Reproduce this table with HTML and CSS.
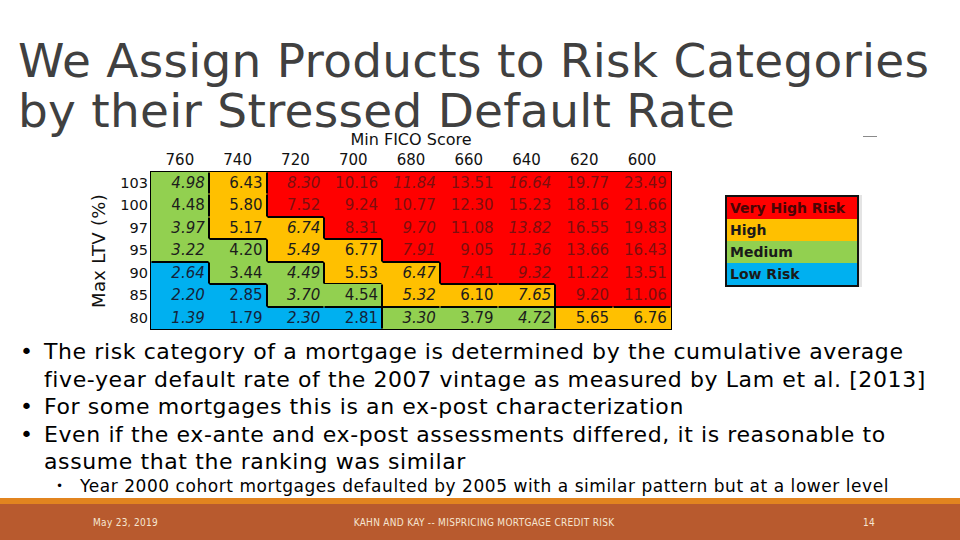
FILE: index.html
```html
<!DOCTYPE html>
<html lang="en">
<head>
<meta charset="utf-8">
<title>We Assign Products to Risk Categories</title>
<link rel="stylesheet" href="styles.css">
</head>
<body>
<div class="slide">
  <h1 class="title"><span class="t1">We Assign Products to Risk Categories</span><span class="t2">by their Stressed Default Rate</span></h1>
  <span class="stray"></span>

  <div class="figure">
    <div class="chart">
      <div class="fico-title">Min FICO Score</div>
      <div class="col-heads">
        <span>760</span><span>740</span><span>720</span><span>700</span><span>680</span><span>660</span><span>640</span><span>620</span><span>600</span>
      </div>
      <div class="ylabel">Max LTV (%)</div>
      <div class="row-heads">
        <span>103</span><span>100</span><span>97</span><span>95</span><span>90</span><span>85</span><span>80</span>
      </div>
      <div class="cells">
        <!-- 103 -->
        <span class="cell cg it e-r">4.98</span>
        <span class="cell co e-l e-r">6.43</span>
        <span class="cell cr it e-l">8.30</span>
        <span class="cell cr">10.16</span>
        <span class="cell cr it">11.84</span>
        <span class="cell cr">13.51</span>
        <span class="cell cr it">16.64</span>
        <span class="cell cr">19.77</span>
        <span class="cell cr">23.49</span>
        <!-- 100 -->
        <span class="cell cg e-r">4.48</span>
        <span class="cell co e-l e-r">5.80</span>
        <span class="cell cr e-l e-b">7.52</span>
        <span class="cell cr">9.24</span>
        <span class="cell cr">10.77</span>
        <span class="cell cr">12.30</span>
        <span class="cell cr">15.23</span>
        <span class="cell cr">18.16</span>
        <span class="cell cr">21.66</span>
        <!-- 97 -->
        <span class="cell cg it e-r">3.97</span>
        <span class="cell co e-l e-b">5.17</span>
        <span class="cell co it e-t e-r">6.74</span>
        <span class="cell cr e-l e-b">8.31</span>
        <span class="cell cr it">9.70</span>
        <span class="cell cr">11.08</span>
        <span class="cell cr it">13.82</span>
        <span class="cell cr">16.55</span>
        <span class="cell cr">19.83</span>
        <!-- 95 -->
        <span class="cell cg it e-b">3.22</span>
        <span class="cell cg e-t e-r">4.20</span>
        <span class="cell co it e-l e-b">5.49</span>
        <span class="cell co e-t e-r">6.77</span>
        <span class="cell cr it e-l e-b">7.91</span>
        <span class="cell cr">9.05</span>
        <span class="cell cr it">11.36</span>
        <span class="cell cr">13.66</span>
        <span class="cell cr">16.43</span>
        <!-- 90 -->
        <span class="cell cb it e-t e-r">2.64</span>
        <span class="cell cg e-l e-b">3.44</span>
        <span class="cell cg it e-t e-r">4.49</span>
        <span class="cell co e-l e-b">5.53</span>
        <span class="cell co it e-t e-r">6.47</span>
        <span class="cell cr e-l e-b">7.41</span>
        <span class="cell cr it e-b">9.32</span>
        <span class="cell cr">11.22</span>
        <span class="cell cr">13.51</span>
        <!-- 85 -->
        <span class="cell cb it">2.20</span>
        <span class="cell cb e-t e-r">2.85</span>
        <span class="cell cg it e-l e-b">3.70</span>
        <span class="cell cg e-r e-b">4.54</span>
        <span class="cell co it e-l e-b">5.32</span>
        <span class="cell co e-t e-b">6.10</span>
        <span class="cell co it e-t e-r e-b">7.65</span>
        <span class="cell cr e-l e-b">9.20</span>
        <span class="cell cr e-b">11.06</span>
        <!-- 80 -->
        <span class="cell cb it">1.39</span>
        <span class="cell cb">1.79</span>
        <span class="cell cb it e-t">2.30</span>
        <span class="cell cb e-t e-r">2.81</span>
        <span class="cell cg it e-t e-l">3.30</span>
        <span class="cell cg e-t">3.79</span>
        <span class="cell cg it e-t e-r">4.72</span>
        <span class="cell co e-t e-l">5.65</span>
        <span class="cell co e-t">6.76</span>
      </div>
    </div>

    <div class="legend">
      <div class="leg cr">Very High Risk</div>
      <div class="leg co">High</div>
      <div class="leg cg">Medium</div>
      <div class="leg cb">Low Risk</div>
    </div>
  </div>

  <ul class="bullets">
    <li>The risk category of a mortgage is determined by the cumulative average five-year default rate of the 2007 vintage as measured by Lam et al. [2013]</li>
    <li>For some mortgages this is an ex-post characterization</li>
    <li>Even if the ex-ante and ex-post assessments differed, it is reasonable to assume that the ranking was similar</li>
  </ul>
  <ul class="sub-bullets">
    <li>Year 2000 cohort mortgages defaulted by 2005 with a similar pattern but at a lower level</li>
  </ul>

  <footer class="footer">
    <div class="footer-band">
      <span class="f-date">May 23, 2019</span>
      <span class="f-title">KAHN AND KAY -- MISPRICING MORTGAGE CREDIT RISK</span>
      <span class="f-num">14</span>
    </div>
  </footer>
</div>
</body>
</html>
```

FILE: styles.css
```css
* { box-sizing: border-box; }

html, body {
  margin: 0;
  padding: 0;
  background: #ffffff;
}

.slide {
  position: relative;
  width: 960px;
  height: 540px;
  overflow: hidden;
  display: flex;
  flex-direction: column;
  font-family: "DejaVu Sans", Verdana, sans-serif;
  color: #000;
}

.title {
  margin: 0;
  padding: 36px 0 0 18px;
  font-weight: normal;
  font-size: 47px;
  letter-spacing: 0.25px;
  color: #404040;
  white-space: nowrap;
}

.t1 {
  display: block;
  line-height: 50px;
}

.t2 {
  display: block;
  line-height: 40px;
  margin-top: 5px;
}

.stray {
  position: absolute;
  left: 863px;
  top: 136px;
  width: 14px;
  height: 1px;
  background: #8a8a8a;
}

.figure {
  display: flex;
  align-items: flex-start;
  position: relative;
}

.chart {
  margin-left: 84px;
  display: grid;
  grid-template-columns: 28px 38px 522px;
  grid-template-rows: 19px 21px auto;
}

.fico-title {
  grid-column: 3;
  grid-row: 1;
  padding-top: 2px;
  text-align: center;
  font-size: 16px;
  line-height: 14px;
  color: #111;
}

.col-heads {
  grid-column: 3;
  grid-row: 2;
  display: grid;
  grid-template-columns: repeat(9, 1fr);
  padding: 0 1px;
  font-size: 15px;
  line-height: 20px;
  color: #111;
  text-align: center;
}

.ylabel {
  grid-column: 1;
  grid-row: 3;
  writing-mode: vertical-rl;
  transform: rotate(180deg);
  font-size: 18px;
  letter-spacing: 0.3px;
  color: #111;
  display: flex;
  align-items: center;
  justify-content: center;
}

.row-heads {
  grid-column: 2;
  grid-row: 3;
  display: grid;
  grid-template-rows: repeat(7, 22.43px);
  padding-top: 1px;
  font-size: 14.5px;
  color: #111;
  text-align: right;
  padding-right: 2px;
}

.row-heads span {
  line-height: 22.43px;
}

.cells {
  grid-column: 3;
  grid-row: 3;
  display: grid;
  grid-template-columns: repeat(9, 57.78px);
  grid-template-rows: repeat(7, 22.43px);
  border: 1px solid #000;
}

.cell {
  border: 1px solid transparent;
  text-align: right;
  padding-right: 3px;
  font-size: 15px;
  line-height: 20.4px;
  color: #1c1c1c;
}

.cell.it { font-style: italic; }

.cg { background: #92d050; }
.co { background: #ffc000; }
.cr { background: #ff0000; }
.cb { background: #00b0f0; }

.cell.cr { color: #7d0f0f; }
.cell.cb { color: #14233a; }

.e-t { border-top-color: #000; }
.e-r { border-right-color: #000; }
.e-b { border-bottom-color: #000; }
.e-l { border-left-color: #000; }

.legend {
  margin-left: 53px;
  margin-top: 64px;
  width: 134px;
  border: 2px solid #111;
  display: flex;
  flex-direction: column;
  box-shadow: 3px 0 0 #e4e4e4;
}

.leg {
  height: 22px;
  line-height: 22px;
  padding-left: 3px;
  font-size: 14px;
  font-weight: bold;
  color: #1a1a1a;
  white-space: nowrap;
}

.leg.cr { color: #4a0505; }

.bullets {
  list-style: none;
  margin: 8px 25px 0 20px;
  padding: 0;
  font-size: 22px;
  letter-spacing: 0.6px;
  line-height: 27.6px;
  color: #000;
}

.bullets li,
.sub-bullets li {
  display: flex;
}

.bullets li::before {
  content: "\2022";
  flex: none;
  width: 24px;
}

.sub-bullets {
  list-style: none;
  margin: 0 0 0 56px;
  padding: 0;
  font-size: 17px;
  letter-spacing: 0.55px;
  line-height: 20px;
  color: #000;
  white-space: nowrap;
}

.sub-bullets li::before {
  content: "\2022";
  flex: none;
  width: 24px;
  font-size: 12px;
}

.footer {
  margin-top: auto;
  border-top: 6px solid #e2841f;
}

.footer-band {
  height: 36px;
  background: #b85a2e;
  display: grid;
  grid-template-columns: 1fr auto 1fr;
  align-items: center;
  padding: 0 85px 0 93px;
  font-family: "DejaVu Sans Condensed", "DejaVu Sans", sans-serif;
  font-stretch: condensed;
  font-size: 10px;
  letter-spacing: 0.3px;
  color: #f6e6d2;
}

.f-num { text-align: right; }
```
